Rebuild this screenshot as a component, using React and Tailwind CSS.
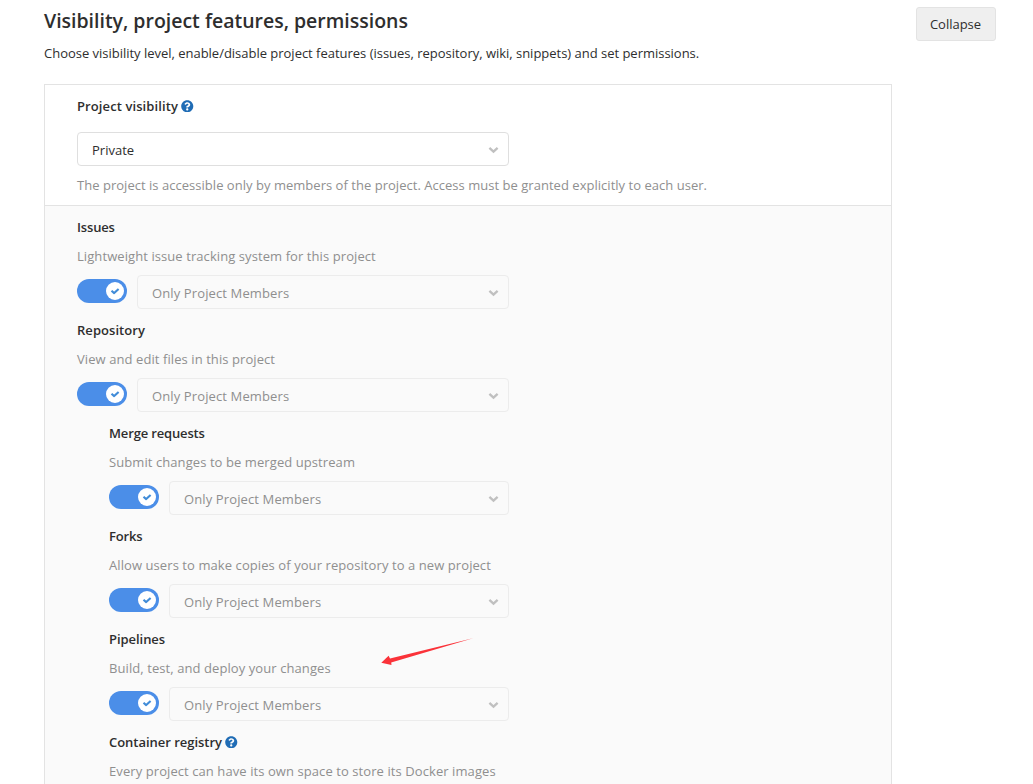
import React from "react";
import { FaQuestionCircle } from "react-icons/fa";

function Help() {
  return <FaQuestionCircle className="h-[12.5px] w-[12.5px] text-[#1f6cb5]" />;
}

function Select({ value, disabled }) {
  return (
    <div
      className={
        "flex h-[34px] flex-1 items-center justify-between rounded border pl-3.5 pr-2 " +
        (disabled
          ? "border-[#ececec] bg-[#fafafa] text-[#8f8f8f]"
          : "border-[#dfdfdf] bg-white text-[#2e2e2e]")
      }
    >
      <span className={disabled ? "pt-0.5 tracking-[0.12px]" : "pt-0.5"}>{value}</span>
      <svg className="h-3 w-3" viewBox="0 0 12 12" fill="none" stroke="#c0c0c0" strokeWidth="2.3">
        <path d="M1.4 4.8 L5.5 8.6 L9.6 4.8" />
      </svg>
    </div>
  );
}

function Toggle() {
  return (
    <div className="mt-1 flex h-6 w-[50px] items-center justify-end rounded-full bg-[#4b8ee8] pr-[3px]">
      <div className="flex h-[18px] w-[18px] items-center justify-center rounded-full bg-white">
        <svg className="h-[18px] w-[18px]" viewBox="0 0 18 18" fill="none" stroke="#418cd8" strokeWidth="2.1" strokeLinejoin="round">
          <path d="M5.5 8.7 L8.2 11.1 L12.6 7" />
        </svg>
      </div>
    </div>
  );
}

function Feature({ title, text, value, nested, help, titleSpacing = "tracking-[-0.15px]" }) {
  return (
    <section className={"h-[103px] shrink-0 " + (nested ? "pl-16" : "pl-8")}>
      <h3 className={"flex h-5 items-center gap-[3.5px] font-semibold text-[#2e2e2e] " + titleSpacing}>
        {title}
        {help && <Help />}
      </h3>
      <p className="mt-[9px] h-5 tracking-[0.08px] text-[#8f8f8f]">{text}</p>
      {value && (
        <div className={"mt-[9px] flex items-start gap-2.5 " + (nested ? "w-[400px]" : "w-[432px]")}>
          <Toggle />
          <Select value={value} disabled />
        </div>
      )}
    </section>
  );
}

const MEMBERS = "Only Project Members";

export default function App() {
  return (
    <div className="relative h-[784px] w-[1033px] overflow-hidden bg-white pl-11 font-['Open_Sans','Noto_Sans',sans-serif] text-[13px] leading-5 text-[#2e2e2e]">
      <header className="flex h-[84px] items-start justify-between pr-[37px]">
        <div>
          <h2 className="mt-[9px] h-6 text-[19.5px] leading-6 font-semibold tracking-[-0.01px]">
            Visibility, project features, permissions
          </h2>
          <p className="mt-2.5 h-5 tracking-[-0.017px]">
            Choose visibility level, enable/disable project features (issues, repository, wiki, snippets) and set permissions.
          </p>
        </div>
        <button className="mt-[7px] h-[34px] w-20 rounded-[3px] border border-[#e3e3e3] bg-[#efefef] pr-px">
          Collapse
        </button>
      </header>
      <main className="flex h-[720px] w-[848px] flex-col border border-[#e3e3e3]">
        <section className="h-[121px] shrink-0 border-b border-[#e3e3e3] pt-[11px] pl-8">
          <h3 className="flex h-5 items-center gap-[3px] font-semibold tracking-[0.1px]">
            Project visibility
            <Help />
          </h3>
          <div className="mt-4 flex w-[432px]">
            <Select value="Private" />
          </div>
          <p className="mt-[9px] h-5 tracking-[0.028px] text-[#8f8f8f]">
            The project is accessible only by members of the project. Access must be granted explicitly to each user.
          </p>
        </section>
        <div className="flex flex-1 flex-col bg-[#fafafa] pt-[11px]">
          <Feature title="Issues" value={MEMBERS} text="Lightweight issue tracking system for this project" />
          <Feature title="Repository" value={MEMBERS} titleSpacing="tracking-[0.05px]" text="View and edit files in this project" />
          <Feature nested title="Merge requests" value={MEMBERS} text="Submit changes to be merged upstream" />
          <Feature nested title="Forks" value={MEMBERS} text="Allow users to make copies of your repository to a new project" />
          <Feature nested title="Pipelines" value={MEMBERS} titleSpacing="tracking-[-0.05px]" text="Build, test, and deploy your changes" />
          <Feature nested help title="Container registry" titleSpacing="tracking-[-0.03px]" text="Every project can have its own space to store its Docker images" />
        </div>
      </main>
      <svg className="absolute top-[630px] left-[375px] h-10 w-[105px]" viewBox="375 630 105 40" fill="#fa3239">
        <path d="M473 638.2 L390 658.4 L388.6 655.8 L381.3 662.8 L391.5 665 L391.2 662.6 Z" />
      </svg>
    </div>
  );
}
